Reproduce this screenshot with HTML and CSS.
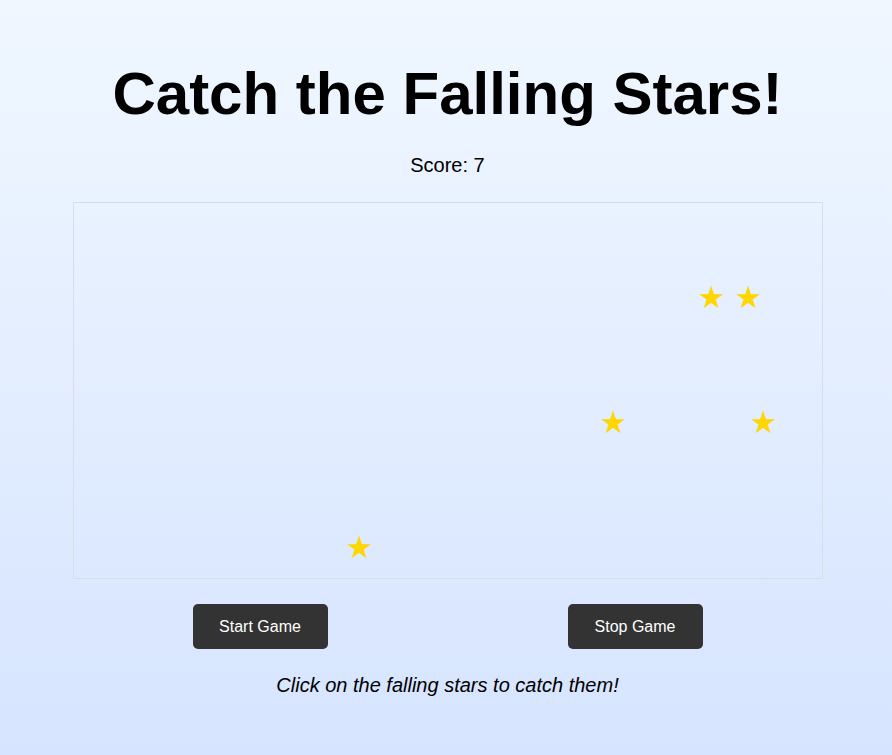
FILE: index.html
```html
<!DOCTYPE html>
<html lang="en">
<head>
<meta charset="utf-8">
<title>Catch the Falling Stars!</title>
<link rel="stylesheet" href="styles.css">
</head>
<body>
<main class="page">
  <h1 class="title">Catch the Falling Stars!</h1>
  <p class="score">Score: <span class="score-value">7</span></p>
  <div class="game-area">
    <span class="star" style="left:638px;top:94px">★</span>
    <span class="star" style="left:675px;top:94px">★</span>
    <span class="star" style="left:540px;top:219px">★</span>
    <span class="star" style="left:690px;top:219px">★</span>
    <span class="star" style="left:286px;top:344px">★</span>
  </div>
  <div class="controls">
    <button class="btn" type="button">Start Game</button>
    <button class="btn" type="button">Stop Game</button>
  </div>
  <p class="hint">Click on the falling stars to catch them!</p>
</main>
</body>
</html>
```

FILE: styles.css
```css
html, body {
  height: 100%;
}
body {
  margin: 0;
  font-family: "Liberation Sans", Arial, sans-serif;
  color: #000;
  background: linear-gradient(to bottom, #f0f7ff, #d6e4ff);
}
.page {
  display: flex;
  flex-direction: column;
  align-items: center;
  padding: 0 0 0 3px;
}
.title {
  margin: 58px 0 0;
  font-size: 60px;
  font-weight: bold;
  line-height: 72px;
}
.score {
  margin: 23px 0 0;
  font-size: 20px;
  line-height: 24px;
}
.game-area {
  position: relative;
  box-sizing: border-box;
  width: 750px;
  height: 377px;
  margin-top: 25px;
  border: 1px solid #d9dce3;
}
.star {
  position: absolute;
  font-family: "DejaVu Sans", sans-serif;
  font-size: 31px;
  line-height: 31px;
  color: #ffd700;
  transform: translate(-50%, -50%);
}
.controls {
  display: flex;
  justify-content: space-around;
  width: 750px;
  margin-top: 25px;
}
.btn {
  width: 135px;
  height: 45px;
  border: none;
  border-radius: 5px;
  background: #333;
  color: #fff;
  font-family: "Liberation Sans", Arial, sans-serif;
  font-size: 16px;
  cursor: pointer;
}
.hint {
  margin: 24px 0 0;
  font-size: 20px;
  font-style: italic;
  line-height: 24px;
}
```
